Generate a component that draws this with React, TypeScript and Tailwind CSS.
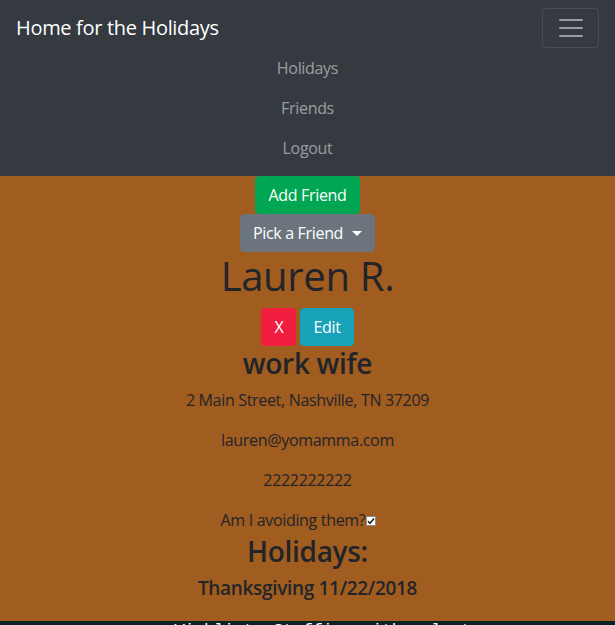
import React from 'react';

const font = { fontFamily: '"Open Sans", "Noto Sans", sans-serif' };

const Navbar: React.FC = () => (
    <nav className="bg-[#343a40] px-4 py-2">
        <div className="flex items-center justify-between h-[40px]">
            <span className="text-[20px] text-white leading-[30px]">Home for the Holidays</span>
            <button className="w-[57px] h-[40px] flex items-center justify-center rounded-[4px] border border-white/10">
                <svg width="30" height="30" viewBox="0 0 30 30">
                    <path d="M4 7h22M4 15h22M4 23h22" stroke="rgba(255,255,255,0.5)" strokeWidth="2" strokeLinecap="round" />
                </svg>
            </button>
        </div>
        <ul className="flex flex-col items-center text-base text-white/50">
            <li className="py-2 leading-6">Holidays</li>
            <li className="py-2 leading-6">Friends</li>
            <li className="py-2 leading-6">Logout</li>
        </ul>
    </nav>
);

const App: React.FC = () => {
    return (
        <div style={font} className="min-h-[625px] bg-[#062224] tracking-[-0.02em]">
            <Navbar />
            <main className="bg-[#a15c1f] flex flex-col items-center text-[#212529] pb-[13px]">
                <button className="bg-[#00a651] text-white px-3 py-[6px] leading-6 rounded-[4px] border border-[#00a651]">
                    Add Friend
                </button>
                <button className="bg-[#6c757d] text-white px-3 py-[6px] leading-6 rounded-[4px] border border-[#6c757d] flex items-center">
                    Pick a Friend
                    <span className="ml-[9px] inline-block w-0 h-0 border-x-[5px] border-x-transparent border-t-[5px] border-t-white" />
                </button>
                <h1 className="text-[40px] leading-[48px] font-medium mb-2">Lauren R.</h1>
                <div className="flex gap-1">
                    <button className="bg-[#f21e3f] text-white px-3 py-[6px] leading-6 rounded-[4px] border border-[#f21e3f]">X</button>
                    <button className="bg-[#17a2b8] text-white px-3 py-[6px] leading-6 rounded-[4px] border border-[#17a2b8]">Edit</button>
                </div>
                <h3 className="text-[28px] leading-[34px] font-semibold mb-2">work wife</h3>
                <p className="leading-6 mb-4">2 Main Street, Nashville, TN 37209</p>
                <p className="leading-6 mb-4">lauren@yomamma.com</p>
                <p className="leading-6 mb-4">2222222222</p>
                <div className="leading-6 flex items-center mr-[18px]">
                    Am I avoiding them?
                    <span className="w-[10px] h-[10px] ml-[1px] mt-[1px] bg-white border border-[#8a8a8a] flex items-center justify-center">
                        <svg width="8" height="8" viewBox="0 0 8 8">
                            <path d="M1 4.2l2 2L7 1.5" fill="none" stroke="#222" strokeWidth="1.6" />
                        </svg>
                    </span>
                </div>
                <h3 className="text-[28px] leading-[34px] font-semibold mt-[2px] mb-2">Holidays:</h3>
                <h5 className="text-[19px] leading-6 font-semibold mb-2">Thanksgiving 11/22/2018</h5>
            </main>
            <div className="h-[4px] overflow-hidden flex justify-center">
                <span className="text-white text-[17px] leading-none font-['Liberation_Mono',monospace] mt-[1px] ml-[50px]">
                    Wishlist: Stuffing with walnuts:
                </span>
            </div>
        </div>
    );
};

export default App;
